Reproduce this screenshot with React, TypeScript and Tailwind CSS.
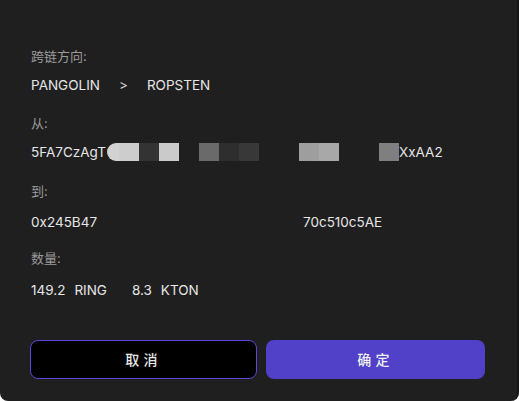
import React from "react";

const font = { fontFamily: 'Inter, "Noto Sans CJK SC", sans-serif' };

function Label({ children }: { children: React.ReactNode }) {
  return <div className="text-[13px] leading-[16px] text-[#9b9b9b]">{children}</div>;
}

function Value({ children }: { children: React.ReactNode }) {
  return <div className="flex items-center text-[13.5px] leading-[16px] text-[#e6e6e6] h-[18px]">{children}</div>;
}

export default function App() {
  return (
    <div className="w-[519px] h-[401px] bg-white" style={font}>
      <div className="w-[519px] h-[401px] bg-[#1f1f1f] rounded-b-[8px] border-r-2 border-[#161616] px-[31px] pt-[48px] flex flex-col">
        <Label>跨链方向:</Label>
        <div className="mt-[12px]">
          <Value>
            <span>PANGOLIN</span>
            <span className="ml-[19px] text-[#cfcfcf]">&gt;</span>
            <span className="ml-[19px]">ROPSTEN</span>
          </Value>
        </div>
        <div className="mt-[21px]">
          <Label>从:</Label>
        </div>
        <div className="mt-[12px]">
          <Value>
            <span className="w-[76px] overflow-hidden whitespace-nowrap">5FA7CzAgT</span>
            <div className="flex h-[18px]">
              <div className="w-[12px] bg-[#d2d2d2] rounded-l-[9px]" />
              <div className="w-[20px] bg-[#cdcdcd]" />
              <div className="w-[20px] bg-[#333333]" />
              <div className="w-[20px] bg-[#cacaca]" />
            </div>
            <div className="flex h-[18px] ml-[20px]">
              <div className="w-[20px] bg-[#6a6a6a]" />
              <div className="w-[20px] bg-[#2e2e2e]" />
              <div className="w-[20px] bg-[#383838]" />
            </div>
            <div className="flex h-[18px] ml-[40px]">
              <div className="w-[20px] bg-[#9e9e9e]" />
              <div className="w-[20px] bg-[#a8a8a8]" />
            </div>
            <div className="flex h-[18px] ml-[40px]">
              <div className="w-[20px] bg-[#7f7f7f]" />
            </div>
            <span>XxAA2</span>
          </Value>
        </div>
        <div className="mt-[22px]">
          <Label>到:</Label>
        </div>
        <div className="mt-[14px]">
          <Value>
            <span className="w-[272px]">0x245B47</span>
            <span>70c510c5AE</span>
          </Value>
        </div>
        <div className="mt-[19px]">
          <Label>数量:</Label>
        </div>
        <div className="mt-[15px]">
          <Value>
            <span>149.2</span>
            <span className="ml-[9px]">RING</span>
            <span className="ml-[25px]">8.3</span>
            <span className="ml-[9px]">KTON</span>
          </Value>
        </div>
        <div className="mt-[41px] flex gap-[9px] -ml-px">
          <button className="w-[227px] h-[39px] rounded-[8px] bg-black border border-[#5a48d8] text-[14px] text-[#e8e8e8] tracking-[0.3em] font-medium">
            取消
          </button>
          <button className="w-[219px] h-[39px] rounded-[8px] bg-[#5140c8] text-[14px] text-[#f0f0f0] tracking-[0.3em] font-medium">
            确定
          </button>
        </div>
      </div>
    </div>
  );
}
